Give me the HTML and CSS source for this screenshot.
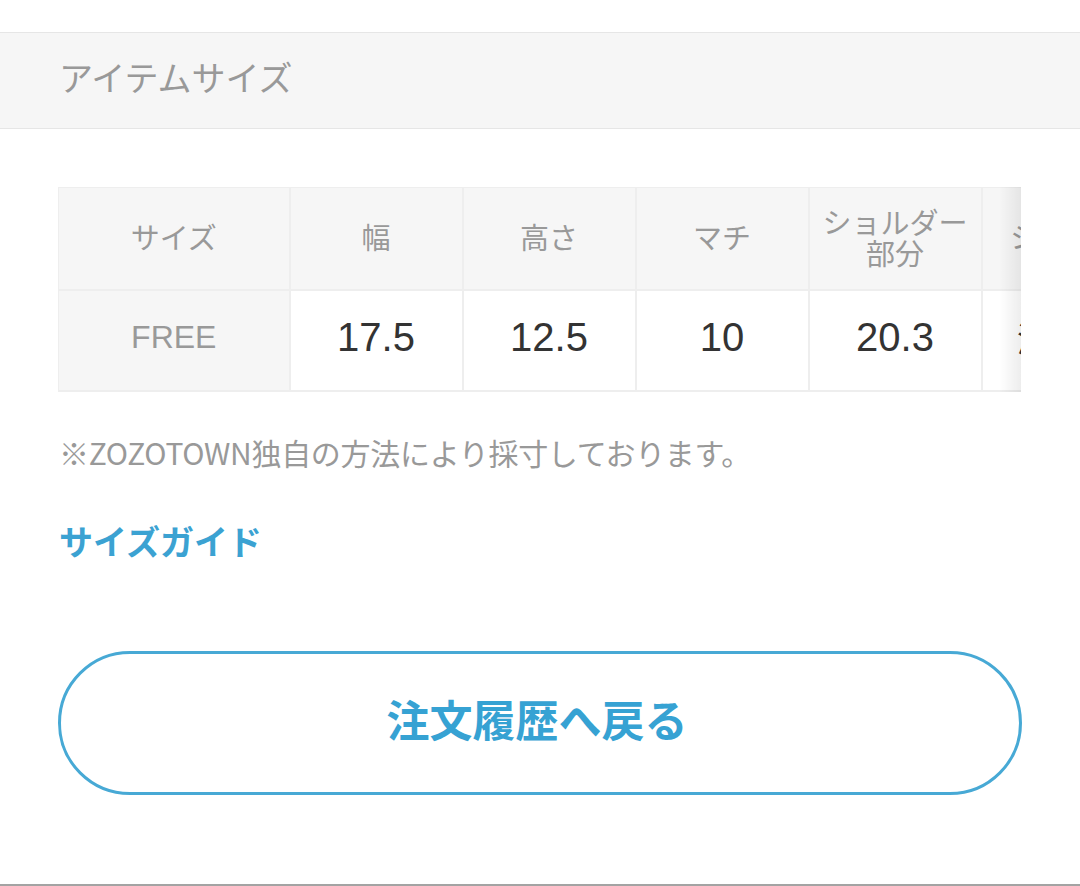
FILE: index.html
```html
<!DOCTYPE html>
<html lang="ja">
<head>
<meta charset="utf-8">
<title>アイテムサイズ</title>
<link rel="stylesheet" href="styles.css">
</head>
<body>
<div class="page">
  <div class="top-space"></div>
  <h2 class="section-head">アイテムサイズ</h2>
  <div class="content">
    <div class="table-wrap">
      <table class="size-table">
        <colgroup>
          <col class="c-first"><col class="c"><col class="c"><col class="c"><col class="c"><col class="c">
        </colgroup>
        <tr class="row-head">
          <th>サイズ</th>
          <th>幅</th>
          <th>高さ</th>
          <th>マチ</th>
          <th class="two-line">ショルダー<br>部分</th>
          <th>シート幅</th>
        </tr>
        <tr class="row-data">
          <th class="size-name">FREE</th>
          <td>17.5</td>
          <td>12.5</td>
          <td>10</td>
          <td>20.3</td>
          <td class="cjk">測定外</td>
        </tr>
      </table>
      <div class="scroll-shadow"></div>
    </div>
    <p class="note">※ZOZOTOWN独自の方法により採寸しております。</p>
    <a class="guide" href="#">サイズガイド</a>
    <a class="back-btn" href="#">注文履歴へ戻る</a>
  </div>
  <div class="bottom-line"></div>
</div>
</body>
</html>
```

FILE: styles.css
```css
html, body {
  margin: 0;
  padding: 0;
  background: #ffffff;
}

body {
  font-family: "Noto Sans CJK JP", "Liberation Sans", sans-serif;
  width: 1080px;
  height: 886px;
  overflow: hidden;
}

.page {
  display: flex;
  flex-direction: column;
}

.top-space {
  height: 32px;
}

.section-head {
  margin: 0;
  height: 87px;
  padding: 0 0 8px 59px;
  box-sizing: content-box;
  display: flex;
  align-items: center;
  background: #f6f6f6;
  border-top: 1px solid #e6e6e6;
  border-bottom: 1px solid #e6e6e6;
  font-size: 34px;
  line-height: 40px;
  font-weight: 400;
  color: #999999;
}

.content {
  padding: 58px 59px 0 58px;
  display: flex;
  flex-direction: column;
  align-items: flex-start;
}

.table-wrap {
  position: relative;
  width: 963px;
  overflow: hidden;
}

.size-table {
  border-collapse: collapse;
  table-layout: fixed;
  width: 1095px;
}

.c-first { width: 231px; }
.c { width: 173px; }

.size-table th,
.size-table td {
  border: 2px solid #eeeeee;
  text-align: center;
  vertical-align: middle;
  padding: 0;
  white-space: nowrap;
}

.size-table tr:first-child th { border-top: 1px solid #eeeeee; }
.size-table tr th:first-child { border-left: 1px solid #eeeeee; }

.row-head th {
  height: 97px;
  background: #f6f6f6;
  font-size: 29px;
  font-weight: 400;
  color: #999999;
  line-height: 31px;
  padding-bottom: 4px;
}

.row-data th,
.row-data td {
  height: 93px;
  padding-bottom: 6px;
}

.row-data th.size-name {
  background: #f6f6f6;
  font-family: "Liberation Sans", "Noto Sans CJK JP", sans-serif;
  font-size: 32px;
  font-weight: 400;
  color: #999999;
}

.row-data td {
  background: #ffffff;
  font-family: "Liberation Sans", "Noto Sans CJK JP", sans-serif;
  font-size: 40px;
  color: #333333;
}

.row-data td.cjk {
  font-family: "Noto Sans CJK JP", sans-serif;
  font-size: 34px;
}

.scroll-shadow {
  position: absolute;
  top: 0;
  right: 0;
  width: 22px;
  height: 100%;
  background: linear-gradient(to right, rgba(0,0,0,0), rgba(0,0,0,0.07));
  pointer-events: none;
}

.note {
  margin: 40px 0 0 1px;
  font-size: 30px;
  line-height: 40px;
  color: #999999;
  letter-spacing: -0.3px;
}

.guide {
  margin: 49px 0 0 1px;
  font-size: 34px;
  line-height: 40px;
  font-weight: 700;
  color: #3ba2d2;
  text-decoration: none;
}

.back-btn {
  margin-top: 90px;
  box-sizing: border-box;
  width: 964px;
  height: 144px;
  border: 3px solid #47a9d5;
  border-radius: 72px;
  display: flex;
  align-items: center;
  justify-content: center;
  font-size: 43px;
  line-height: 50px;
  font-weight: 700;
  color: #36a2d3;
  text-decoration: none;
  padding: 0 6px 10px 0;
}

.bottom-line {
  margin-top: 89px;
  height: 0;
  border-top: 2px solid #a3a3a3;
}
```
